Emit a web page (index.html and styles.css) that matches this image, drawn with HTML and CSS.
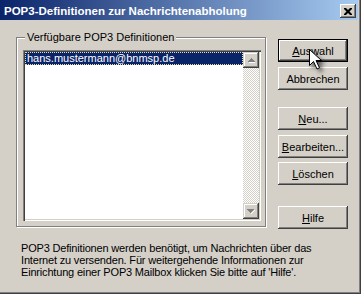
FILE: index.html
```html
<!DOCTYPE html>
<html lang="de">
<head>
  <meta charset="UTF-8">
  <title>POP3-Definitionen zur Nachrichtenabholung</title>
  <link rel="stylesheet" href="styles.css">
</head>
<body>
  <div class="window">
    <div class="titlebar">
      <span class="title">POP3-Definitionen zur Nachrichtenabholung</span>
      <span class="close">
        <svg width="8" height="7" viewBox="0 0 8 7"><path d="M0 0h2l2 2 2-2h2v1l-2.5 2.5 2.5 2.5v1h-2l-2-2-2 2h-2v-1l2.5-2.5-2.5-2.5z" fill="#000"/></svg>
      </span>
    </div>
    <div class="content">
      <div class="main">
        <fieldset class="group">
          <legend>Verfügbare POP3 Definitionen</legend>
          <div class="listbox">
            <ul class="items">
              <li class="selected">hans.mustermann@bnmsp.de</li>
            </ul>
            <div class="scrollbar">
              <div class="sb-btn">
                <svg width="7" height="5" viewBox="0 0 7 5"><path d="M3 0h1v1h1v1h1v1h1v1H0V3h1V2h1V1h1z" fill="#808080"/><path d="M1 4h7v1H1z" fill="#fff"/></svg>
              </div>
              <div class="sb-track"></div>
              <div class="sb-btn">
                <svg width="8" height="5" viewBox="0 0 8 5"><path d="M0 0h7v1H6v1H5v1H4v1H3V3H2V2H1V1H0z" fill="#808080"/><path d="M4 4h1V3h1V2h1V1h1v1H7v1H6v1H5v1H4z" fill="#fff"/></svg>
              </div>
            </div>
          </div>
        </fieldset>
        <div class="buttons">
          <button class="btn default"><u>A</u>uswahl</button>
          <button class="btn">Abbrechen</button>
          <button class="btn spaced"><u>N</u>eu...</button>
          <button class="btn"><u>B</u>earbeiten...</button>
          <button class="btn tight"><u>L</u>öschen</button>
          <button class="btn help"><u>H</u>ilfe</button>
        </div>
      </div>
      <p class="info">POP3 Definitionen werden benötigt, um Nachrichten über das Internet zu versenden. Für weitergehende Informationen zur Einrichtung einer POP3 Mailbox klicken Sie bitte auf 'Hilfe'.</p>
    </div>
    <!-- Mauszeiger über "Auswahl" -->
    <svg class="cursor" width="22" height="28" viewBox="0 0 22 28">
      <path d="M0.5 0.5v16l4-4 3.5 7.5 2.5-1.2-3.5-7.3h5.5z" fill="#fff" stroke="#000" stroke-width="1"/>
    </svg>
  </div>
</body>
</html>
```

FILE: styles.css
```css
:root {
  --face: #d4d0c8;
  --shadow: #808080;
  --dark: #404040;
  --light: #ffffff;
  --navy: #0a246a;
}
* { box-sizing: border-box; }
body {
  margin: 0;
  background: #ffffff;
  font-family: "Liberation Sans", Arial, sans-serif;
  font-size: 11px;
  color: #000;
}
.window {
  position: relative;
  width: 361px;
  height: 294px;
  background: var(--face);
  box-shadow: inset -1px -1px var(--dark), inset -2px -2px var(--shadow);
  padding: 0 3px 3px 0;
}
.titlebar {
  height: 20px;
  display: flex;
  align-items: center;
  justify-content: space-between;
  padding: 0 2px 0 4px;
  background: linear-gradient(to right, var(--navy), #a6caf0);
}
.title {
  color: #fff;
  font-weight: bold;
  font-size: 11.5px;
  padding-top: 1px;
}
.close {
  width: 16px;
  height: 14px;
  margin-top: 2px;
  display: flex;
  align-items: center;
  justify-content: center;
  background: var(--face);
  box-shadow: inset -1px -1px var(--dark), inset 1px 1px var(--light), inset -2px -2px var(--shadow);
}
.content {
  padding: 11px 0 0 16px;
}
.main {
  display: flex;
  align-items: flex-start;
}
.group {
  width: 250px;
  margin: 0;
  padding: 6px 4px 5px 6px;
  border: 1px solid var(--shadow);
  box-shadow: 1px 1px 0 var(--light), inset 1px 1px 0 var(--light);
}
.group legend {
  margin-left: 2px;
  padding: 0 2px;
  line-height: 13px;
  background: var(--face);
}
.listbox {
  width: 238px;
  height: 171px;
  display: flex;
  padding: 2px;
  background: #fff;
  box-shadow: inset 1px 1px var(--shadow), inset 2px 2px var(--dark), inset -1px -1px var(--light), inset -2px -2px var(--face);
}
.items {
  flex: 1;
  list-style: none;
  margin: 0;
  padding: 0;
}
.items li {
  height: 13px;
  line-height: 13px;
  padding-left: 2px;
}
.items li.selected {
  background: var(--navy);
  color: #fff;
  outline: 1px dotted #e8e0a0;
  outline-offset: -1px;
}
.scrollbar {
  width: 16px;
  display: flex;
  flex-direction: column;
}
.sb-btn {
  height: 16px;
  display: flex;
  align-items: center;
  justify-content: center;
  background: var(--face);
  box-shadow: inset -1px -1px var(--dark), inset 1px 1px var(--face), inset -2px -2px var(--shadow), inset 2px 2px var(--light);
}
.sb-track {
  flex: 1;
  background: repeating-conic-gradient(var(--face) 0 25%, #fff 0 50%) 0 0 / 2px 2px;
}
.buttons {
  display: flex;
  flex-direction: column;
  margin: 8px 0 0 12px;
}
.btn {
  width: 70px;
  height: 23px;
  margin: 0 0 5px 0;
  padding: 0;
  border: none;
  background: var(--face);
  font-family: inherit;
  font-size: 11px;
  color: #000;
  box-shadow: inset -1px -1px var(--dark), inset 1px 1px var(--light), inset -2px -2px var(--shadow);
}
.btn.default {
  border: 1px solid #000;
}
.btn.spaced { margin-top: 12px; }
.btn.tight { margin-top: -1px; }
.btn.help { margin-top: 16px; }
.info {
  margin: 8px 0 0 5px;
  width: 320px;
  line-height: 12px;
  letter-spacing: -0.18px;
}
.cursor {
  position: absolute;
  left: 309px;
  top: 49px;
  filter: drop-shadow(3px 3px 2px rgba(0,0,0,0.6));
}
```
